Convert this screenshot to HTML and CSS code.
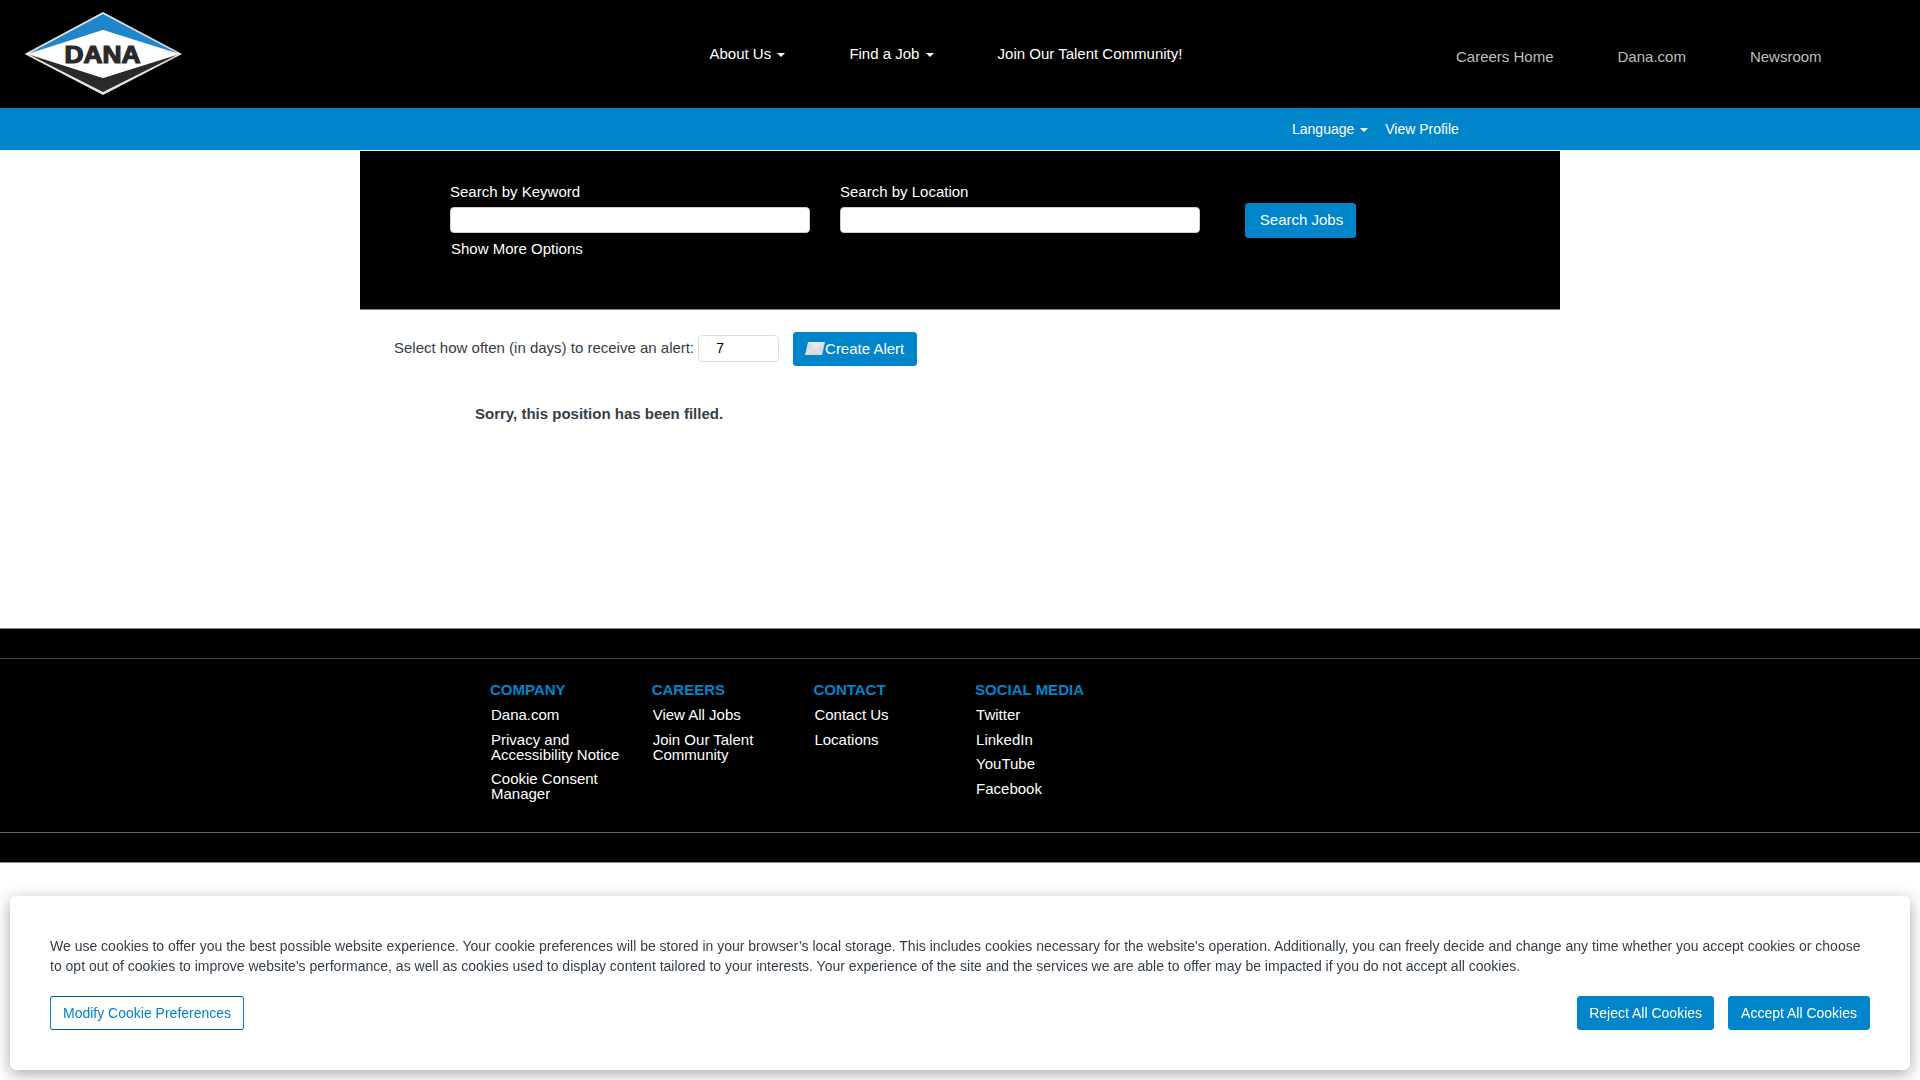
FILE: index.html
```html
<!DOCTYPE html>
<html lang="en">
<head>
    <meta charset="UTF-8">
    <title>Dana Careers</title>
    <link rel="stylesheet" href="styles.css">
</head>
<body>
    <header class="topHeader">
        <a class="logo" href="#">
            <svg width="160" height="86" viewBox="0 0 160 86">
                <polygon points="0.5,43 79,1 158,43 79,84" fill="#e4e4e4"/>
                <polygon points="6,42 79,3 153,42 79,19" fill="#1f86cc"/>
                <polygon points="6,44 79,81 153,44 79,67" fill="#2b2a2b"/>
                <polygon points="6,43 79,19 153,43 79,67" fill="#fff"/>
                <text x="78.5" y="52" class="logoText" text-anchor="middle" textLength="76" lengthAdjust="spacingAndGlyphs">DANA</text>
            </svg>
        </a>
        <nav class="mainNav">
            <a href="#" class="navLink">About Us <span class="caret"></span></a>
            <a href="#" class="navLink">Find a Job <span class="caret"></span></a>
            <a href="#" class="navLink">Join Our Talent Community!</a>
        </nav>
        <nav class="sideNav">
            <a href="#">Careers Home</a>
            <a href="#">Dana.com</a>
            <a href="#">Newsroom</a>
        </nav>
    </header>
    <div class="blueBar">
        <a href="#">Language <span class="caret"></span></a>
        <a href="#">View Profile</a>
    </div>

    <main class="content">
        <form class="searchBox">
            <div class="searchField">
                <label for="keyword">Search by Keyword</label>
                <input id="keyword" type="text">
                <a href="#" class="moreOptions">Show More Options</a>
            </div>
            <div class="searchField">
                <label for="location">Search by Location</label>
                <input id="location" type="text">
            </div>
            <button type="button" class="btn searchBtn">Search Jobs</button>
        </form>
        <div class="alertRow">
            <label for="days">Select how often (in days) to receive an alert:</label>
            <input id="days" type="text" value="7">
            <button type="button" class="btn alertBtn">
                <svg width="20" height="13" viewBox="0 0 20 13">
                    <polygon points="3,0 20,0 17,13 0,13" fill="#d5dade"/>
                    <polygon points="3,0 20,0 11,7" fill="#e6e9eb"/>
                    <polyline points="0,13 9,6 17,13" fill="none" stroke="#eef0f2" stroke-width="0.7"/>
                </svg>Create Alert
            </button>
        </div>
        <p class="filledMsg">Sorry, this position has been filled.</p>
    </main>

    <footer class="footer">
        <div class="footerInner">
            <div class="footerCol">
                <h3>COMPANY</h3>
                <a href="#">Dana.com</a>
                <a href="#">Privacy and Accessibility Notice</a>
                <a href="#">Cookie Consent Manager</a>
            </div>
            <div class="footerCol">
                <h3>CAREERS</h3>
                <a href="#">View All Jobs</a>
                <a href="#">Join Our Talent Community</a>
            </div>
            <div class="footerCol">
                <h3>CONTACT</h3>
                <a href="#">Contact Us</a>
                <a href="#">Locations</a>
            </div>
            <div class="footerCol">
                <h3>SOCIAL MEDIA</h3>
                <a href="#">Twitter</a>
                <a href="#">LinkedIn</a>
                <a href="#">YouTube</a>
                <a href="#">Facebook</a>
            </div>
        </div>
    </footer>

    <div class="cookieBanner">
        <p>We use cookies to offer you the best possible website experience. Your cookie preferences will be stored in your browser’s local storage. This includes cookies necessary for the website's operation. Additionally, you can freely decide and change any time whether you accept cookies or choose to opt out of cookies to improve website's performance, as well as cookies used to display content tailored to your interests. Your experience of the site and the services we are able to offer may be impacted if you do not accept all cookies.</p>
        <div class="cookieActions">
            <button type="button" class="btn outlineBtn">Modify Cookie Preferences</button>
            <div class="cookieRight">
                <button type="button" class="btn rejectBtn">Reject All Cookies</button>
                <button type="button" class="btn">Accept All Cookies</button>
            </div>
        </div>
    </div>
</body>
</html>
```

FILE: styles.css
```css
* {
    box-sizing: border-box;
}
body {
    font-family: "Liberation Sans", Arial, sans-serif;
    font-size: 15px;
    color: #333e48;
    background-color: #fff;
    margin: 0;
    padding: 0;
    height: 1080px;
    overflow: hidden;
}
a {
    color: inherit;
    text-decoration: none;
}
.topHeader {
    background-color: #000;
    height: 108px;
    display: flex;
    color: #fff;
}
.logo {
    width: 709.5px;
    padding: 11px 0 0 24px;
}
.logoText {
    font-size: 23px;
    font-weight: bold;
    fill: #2b2a2b;
    stroke: #2b2a2b;
    stroke-width: 1.2px;
}
.mainNav {
    width: 746.5px;
    display: flex;
    gap: 64px;
    padding-top: 45px;
}
.navLink {
    line-height: 18px;
}
.caret {
    display: inline-block;
    width: 0;
    height: 0;
    margin-left: 2px;
    vertical-align: middle;
    border-top: 4px solid currentColor;
    border-left: 4px solid transparent;
    border-right: 4px solid transparent;
}
.sideNav {
    display: flex;
    gap: 64px;
    padding-top: 48px;
    line-height: 18px;
    color: #bfbfbf;
}
.blueBar {
    background-color: #0085ca;
    height: 43px;
    border-bottom: 1px solid #fff;
    display: flex;
    gap: 17px;
    padding: 12px 0 0 1292px;
    font-size: 14px;
    line-height: 18px;
    color: #fff;
}
.content {
    height: 477px;
}
.searchBox {
    width: 1200px;
    height: 159px;
    margin-left: 360px;
    background-color: #000;
    border-bottom: 1px solid #888;
    color: #fff;
    display: flex;
    padding: 32px 0 0 90px;
    gap: 30px;
}
.searchField {
    width: 360px;
}
.searchField label {
    display: block;
    line-height: 18px;
    margin-bottom: 6px;
}
.searchField input {
    display: block;
    width: 360px;
    height: 26px;
    border: 1px solid #ccc;
    border-radius: 4px;
    background-color: #fff;
}
.moreOptions {
    display: block;
    margin: 7px 0 0 1px;
    line-height: 18px;
}
.btn {
    font-family: inherit;
    font-size: 14px;
    color: #fff;
    background-color: #0085ca;
    border: 1px solid #0085ca;
    border-radius: 3px;
    height: 34px;
    padding: 0 12px;
    cursor: pointer;
}
.searchBtn {
    font-size: 15px;
    width: 111px;
    height: 35px;
    margin: 20px 0 0 15px;
    padding: 0 0 2px 2px;
}
.alertRow {
    display: flex;
    align-items: center;
    margin: 22px 0 0 394px;
    height: 34px;
}
.alertRow label {
    margin-top: -3px;
}
.alertRow input {
    width: 81px;
    height: 27px;
    margin: -2px 14px 0 4px;
    border: 1px solid #ddd;
    border-radius: 4px;
    padding-left: 17px;
    font-family: inherit;
    font-size: 14px;
    color: #000;
}
.alertBtn {
    font-size: 15px;
    width: 124px;
    display: flex;
    align-items: center;
    justify-content: center;
    white-space: nowrap;
    padding: 0 1px 1px 0;
}
.filledMsg {
    margin: 39px 0 0 475px;
    line-height: 18px;
    font-weight: bold;
}
.footer {
    background-color: #000;
    height: 235px;
    padding-top: 29px;
    border-top: 1px solid #888;
    border-bottom: 1px solid #888;
    color: #fff;
}
.footerInner {
    height: 175px;
    border-top: 1px solid #444;
    border-bottom: 1px solid #666;
    padding: 22px 0 0 490px;
    display: flex;
}
.footerCol {
    width: 161.7px;
}
.footerCol h3 {
    margin: 0 0 8px;
    font-size: 15px;
    line-height: 18px;
    color: #0085ca;
}
.footerCol a {
    display: block;
    width: 135px;
    margin: 0 0 9.5px 1px;
    line-height: 15px;
}
.cookieBanner {
    position: fixed;
    left: 10px;
    top: 896px;
    width: 1900px;
    height: 174px;
    padding: 40px 40px 0;
    font-size: 14px;
    background-color: #fff;
    border-radius: 6px;
    box-shadow: 0 4px 16px rgba(0, 0, 0, 0.35);
}
.cookieBanner p {
    margin: 0 0 20px;
    line-height: 20px;
}
.cookieActions {
    display: flex;
    justify-content: space-between;
}
.cookieRight {
    display: flex;
    gap: 14px;
}
.rejectBtn {
    padding: 0 11px;
}
.outlineBtn {
    background-color: #fff;
    color: #0085ca;
    border-color: #005a8c #0085ca;
}
```
